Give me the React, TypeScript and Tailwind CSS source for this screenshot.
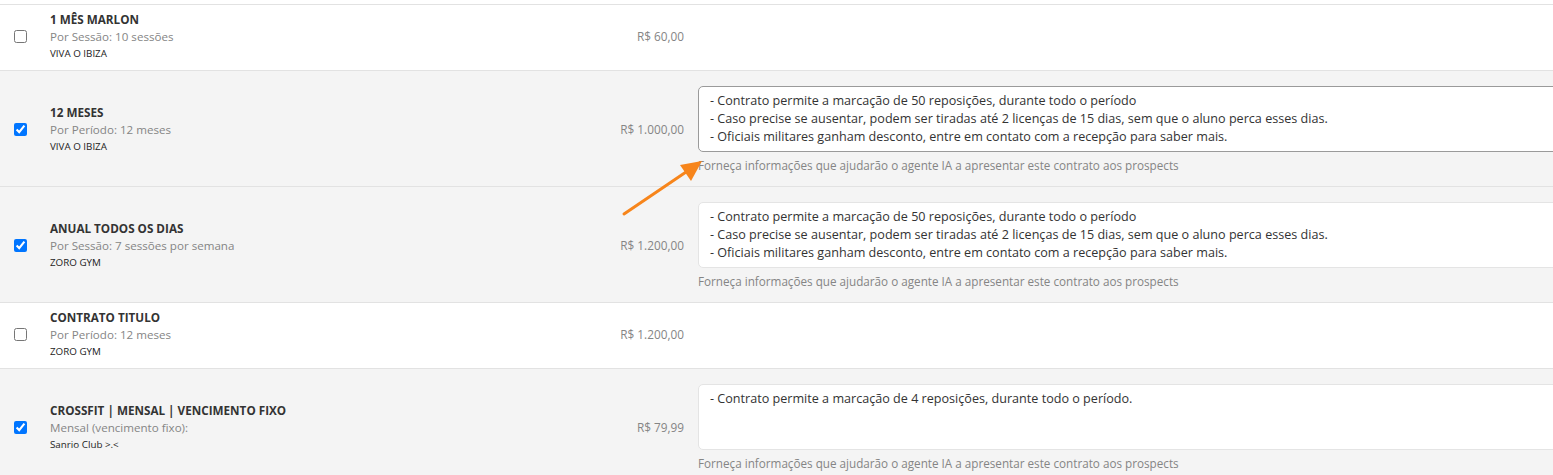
import React from "react"

type Contract = {
  name: string
  kind: string
  company: string
  price: string
  checked: boolean
  notes?: string
  focused?: boolean
}

const HELP = "Forneça informações que ajudarão o agente IA a apresentar este contrato aos prospects"

const NOTES_FULL = [
  "- Contrato permite a marcação de 50 reposições, durante todo o período",
  "- Caso precise se ausentar, podem ser tiradas até 2 licenças de 15 dias, sem que o aluno perca esses dias.",
  "- Oficiais militares ganham desconto, entre em contato com a recepção para saber mais.",
].join("\n")

const contracts: Contract[] = [
  { name: "1 MÊS MARLON", kind: "Por Sessão: 10 sessões", company: "VIVA O IBIZA", price: "R$ 60,00", checked: false },
  { name: "12 MESES", kind: "Por Período: 12 meses", company: "VIVA O IBIZA", price: "R$ 1.000,00", checked: true, notes: NOTES_FULL, focused: true },
  { name: "ANUAL TODOS OS DIAS", kind: "Por Sessão: 7 sessões por semana", company: "ZORO GYM", price: "R$ 1.200,00", checked: true, notes: NOTES_FULL },
  { name: "CONTRATO TITULO", kind: "Por Período: 12 meses", company: "ZORO GYM", price: "R$ 1.200,00", checked: false },
  {
    name: "CROSSFIT | MENSAL | VENCIMENTO FIXO",
    kind: "Mensal (vencimento fixo):",
    company: "Sanrio Club >.<",
    price: "R$ 79,99",
    checked: true,
    notes: "- Contrato permite a marcação de 4 reposições, durante todo o período.",
  },
]

function ContractRow({ c }: { c: Contract }) {
  return (
    <div
      className={
        "flex items-center border-t border-[#e2e2e2] " +
        (c.checked ? "bg-[#f4f4f4] pt-[15px] pb-[13px]" : "bg-white pt-[6px] pb-[8px]")
      }
    >
      <div className="w-[50px] shrink-0 pl-[14px] flex items-center">
        <input type="checkbox" defaultChecked={c.checked} className="m-0 w-[13px] h-[13px]" />
      </div>
      <div className="w-[500px] shrink-0 flex flex-col">
        <span className="text-[11.7px] leading-[17px] font-bold text-[#333]">{c.name}</span>
        <span className="text-[11.6px] leading-[17px] text-[#858585]">{c.kind}</span>
        <span className="text-[9.8px] leading-[17px] text-[#222]">{c.company}</span>
      </div>
      <div className="w-[134px] shrink-0 text-right text-[11.8px] text-[#858585]">{c.price}</div>
      {c.notes && (
        <div className="ml-[14px] w-[880px] shrink-0 flex flex-col">
          <textarea
            readOnly
            defaultValue={c.notes}
            className={
              "h-[66px] resize-none rounded-[5px] bg-white px-[11px] pt-[5px] text-[12.6px] leading-[18px] text-[#333] outline-none overflow-hidden border " +
              (c.focused ? "border-[#9a9a9a]" : "border-[#e4e4e4]")
            }
          />
          <span className="mt-[5px] text-[11.7px] leading-[16px] text-[#858585]">{HELP}</span>
        </div>
      )}
    </div>
  )
}

export default function App() {
  return (
    <div
      className="relative w-[1553px] h-[475px] overflow-hidden bg-white pt-[4px]"
      style={{ fontFamily: '"Open Sans", "Noto Sans", sans-serif' }}
    >
      {contracts.map((c) => (
        <ContractRow key={c.name} c={c} />
      ))}
      {/* annotation arrow pointing at the focused textarea */}
      <svg className="absolute left-0 top-0 pointer-events-none" width="1553" height="475">
        <line x1="624" y1="214" x2="689" y2="170" stroke="#f7851b" strokeWidth="3" strokeLinecap="round" />
        <polygon points="702,161 680,165 691,181" fill="#f7851b" />
      </svg>
    </div>
  )
}
